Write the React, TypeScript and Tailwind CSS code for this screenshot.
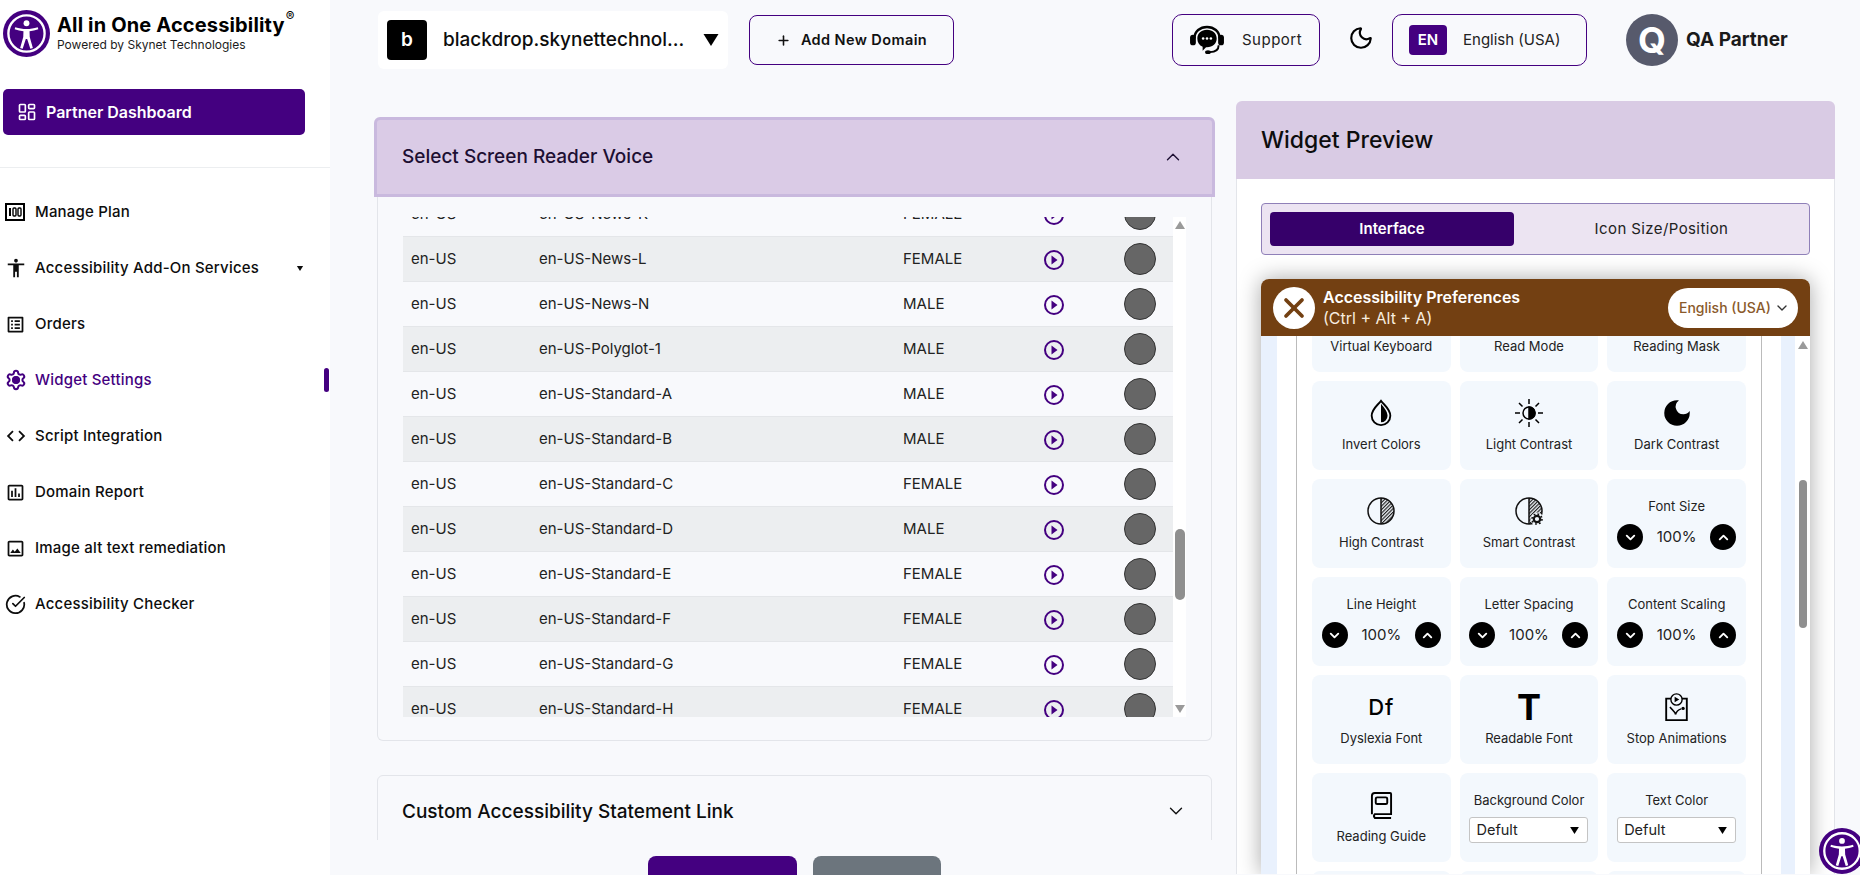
import { ChevronDown, ChevronUp, CircleCheckBig, LayoutDashboard, Moon, Plus, Settings, X } from "lucide-react";
import { MdAccessibility, MdCode, MdDarkMode, MdOutlineAssessment, MdOutlineImage, MdOutlineListAlt } from "react-icons/md";

const voices = [
  ["en-US-News-K", "FEMALE"],
  ["en-US-News-L", "FEMALE"],
  ["en-US-News-N", "MALE"],
  ["en-US-Polyglot-1", "MALE"],
  ["en-US-Standard-A", "MALE"],
  ["en-US-Standard-B", "MALE"],
  ["en-US-Standard-C", "FEMALE"],
  ["en-US-Standard-D", "MALE"],
  ["en-US-Standard-E", "FEMALE"],
  ["en-US-Standard-F", "FEMALE"],
  ["en-US-Standard-G", "FEMALE"],
  ["en-US-Standard-H", "FEMALE"],
];

function LogoMark({ className }: { className: string }) {
  return (
    <svg viewBox="0 0 48 48" className={className}>
      <circle cx="24" cy="24" r="24" fill="#440080" />
      <circle cx="24" cy="24" r="18.5" fill="none" stroke="#fff" strokeWidth="2.4" />
      <circle cx="24" cy="13.5" r="3" fill="#fff" />
      <path
        d="M12.5 17.5c4 1.2 7.5 1.8 11.5 1.8s7.500-.6 11.500-1.800l.6 2.100c-3 1-6 1.700-9 2l.2 6 3.200 11.200-2.600.8-3.200-10h-1.400l-3.200 10-2.600-.8 3.200-11.200.2-6c-3-.3-6-1-9-2z"
        fill="#fff"
      />
    </svg>
  );
}

function PlanIcon() {
  return (
    <svg viewBox="0 0 20 18" className="h-[18px] w-[20px]">
      <rect x="1" y="1" width="18" height="16" fill="none" stroke="#000" strokeWidth="2" />
      <rect x="4" y="5" width="2" height="8" />
      <rect x="8" y="5" width="3" height="8" rx="1" fill="none" stroke="#000" strokeWidth="1.400" />
      <rect x="13" y="5" width="3" height="8" rx="1" fill="none" stroke="#000" strokeWidth="1.400" />
    </svg>
  );
}

function WidgetSettingsIcon() {
  return (
    <span className="relative flex h-[22px] w-[22px] items-center justify-center text-[#440080]">
      <Settings size={22} strokeWidth={2.2} />
      <span className="absolute h-[8px] w-[8px] rounded-full bg-[#440080]" />
    </span>
  );
}

function SupportIcon() {
  return (
    <svg viewBox="0 0 36 32" className="h-[31px] w-[36px]">
      <path d="M5 14C5 6.500 11 2 18 2s13 4.500 13 12" fill="none" stroke="#000" strokeWidth="2.500" />
      <rect x="0.500" y="10" width="6" height="11" rx="3" />
      <rect x="29.500" y="10" width="6" height="11" rx="3" />
      <path d="M18 5c6 0 10 4 10 9s-4 9-10 9h-1l-3.500 3.500V22.500C10 21 8 18 8 14c0-5 4-9 10-9z" />
      <circle cx="14" cy="14" r="1.300" fill="#fff" />
      <circle cx="18" cy="14" r="1.300" fill="#fff" />
      <circle cx="22" cy="14" r="1.300" fill="#fff" />
      <path d="M30 21c0 5-4 7-9 7" fill="none" stroke="#000" strokeWidth="2" />
      <ellipse cx="19" cy="28" rx="3" ry="2" />
    </svg>
  );
}

function PlayIcon() {
  return (
    <svg viewBox="0 0 20 20" className="mt-[2px] h-[20px] w-[20px]">
      <circle cx="10" cy="10" r="9" fill="none" stroke="#440080" strokeWidth="2" />
      <path d="M7.500 5.500l6 4.500-6 4.500z" fill="#440080" />
    </svg>
  );
}

function Triangle({ up, className }: { up?: boolean; className: string }) {
  return (
    <svg viewBox="0 0 10 8" className={className} fill="currentColor">
      <path d={up ? "M5 0l5 8H0z" : "M0 0h10L5 8z"} />
    </svg>
  );
}

function NavItem({ icon, label, active, caret }: { icon: React.ReactNode; label: string; active?: boolean; caret?: boolean }) {
  return (
    <div className={`flex h-[56px] items-center pl-[5px] ${active ? "text-[#440080]" : "text-[#0d0d0d]"}`}>
      <span className="flex w-[30px] shrink-0 items-center">{icon}</span>
      <span className="text-[15px] font-medium tracking-[0.2px]">{label}</span>
      {caret && <Triangle className="ml-auto mr-[26px] h-[5px] w-[8px]" />}
      {active && <span className="ml-auto mr-px h-[24px] w-[5px] rounded-full bg-[#440080]" />}
    </div>
  );
}

function Sidebar() {
  return (
    <aside className="h-full w-[330px] shrink-0 bg-white">
      <div className="flex pl-[3px] pt-[10px]">
        <LogoMark className="h-[47px] w-[47px]" />
        <div className="ml-[7px]">
          <div className="mt-[3px] flex text-[20px] font-bold leading-[24px] tracking-[0.15px] text-black">
            All in One Accessibility<sup className="ml-px mt-[9px] text-[13px] font-normal">®</sup>
          </div>
          <div className="text-[12px] leading-[15px] text-[#1c1c1c]">Powered by Skynet Technologies</div>
        </div>
      </div>
      <div className="ml-[3px] mt-[32px] flex h-[46px] w-[302px] items-center rounded-[5px] bg-[#440080] pl-[14px] text-white">
        <LayoutDashboard size={20} strokeWidth={2} />
        <span className="ml-[9px] text-[16px] font-semibold">Partner Dashboard</span>
      </div>
      <div className="mt-[32px] h-px bg-[#eceef0]" />
      <nav className="mt-[16px]">
        <NavItem icon={<PlanIcon />} label="Manage Plan" />
        <NavItem icon={<MdAccessibility size={22} />} label="Accessibility Add-On Services" caret />
        <NavItem icon={<MdOutlineListAlt size={21} />} label="Orders" />
        <NavItem icon={<WidgetSettingsIcon />} label="Widget Settings" active />
        <NavItem icon={<MdCode size={22} />} label="Script Integration" />
        <NavItem icon={<MdOutlineAssessment size={21} />} label="Domain Report" />
        <NavItem icon={<MdOutlineImage size={21} />} label="Image alt text remediation" />
        <NavItem icon={<CircleCheckBig size={21} strokeWidth={2} />} label="Accessibility Checker" />
      </nav>
    </aside>
  );
}

function TopBar() {
  return (
    <header className="flex h-[80px] items-center">
      <div className="ml-[48px] flex h-[58px] w-[350px] items-center rounded-[6px] bg-white pl-[9px]">
        <span className="flex h-[40px] w-[40px] items-center justify-center rounded-[4px] bg-black text-[19px] font-semibold text-white">b</span>
        <span className="ml-[16px] w-[255px] text-[19px] font-medium text-[#0d0d0d]">blackdrop.skynettechnol...</span>
        <Triangle className="ml-[4px] h-[12px] w-[18px] text-black" />
      </div>
      <div className="ml-[21px] flex h-[50px] w-[205px] items-center justify-center gap-[10px] rounded-[8px] border border-[#440080] text-[14.500px] font-semibold tracking-[0.4px] text-[#111]">
        <Plus size={15} strokeWidth={2.5} />
        Add New Domain
      </div>
      <div className="ml-[218px] flex h-[52px] w-[148px] items-center rounded-[10px] border border-[#440080] pl-[16px]">
        <SupportIcon />
        <span className="ml-[17px] text-[15px] tracking-[0.5px] text-[#222]">Support</span>
      </div>
      <Moon size={26} strokeWidth={2} className="ml-[28px] -mt-[4px] text-black" />
      <div className="ml-[18px] flex h-[52px] w-[195px] items-center rounded-[10px] border border-[#440080] pl-[16px]">
        <span className="flex h-[30px] w-[38px] items-center justify-center rounded-[4px] bg-[#440080] text-[15px] font-semibold text-white">EN</span>
        <span className="ml-[16px] text-[15px] text-[#222]">English (USA)</span>
      </div>
      <span className="ml-[39px] flex h-[52px] w-[52px] items-center justify-center rounded-full bg-[#575a6c] text-[36px] font-bold text-white">Q</span>
      <span className="ml-[8px] text-[19px] font-bold text-[#1a1a1a]">QA Partner</span>
    </header>
  );
}

function VoiceTable() {
  return (
    <div className="mx-[25px] mt-[20px] flex h-[500px] overflow-hidden">
      <div className="-mt-[25px] w-[770px] shrink-0">
        {voices.map(([name, gender], i) => (
          <div
            key={name}
            className={`grid h-[45px] grid-cols-[128px_364px_141px_80px_57px] items-center border-b border-[#e4e6e9] text-[15px] text-[#222] ${
              i % 2 === 1 ? "bg-[#eceef0]" : "bg-[#f8f9fc]"
            }`}
          >
            <span className="pl-[8px]">en-US</span>
            <span className="pl-[8px]">{name}</span>
            <span className="pl-[8px]">{gender}</span>
            <span className="pl-[8px]">
              <PlayIcon />
            </span>
            <span className="pl-[8px]">
              <span className="block h-[32px] w-[32px] rounded-full border border-[#333] bg-[#666]" />
            </span>
          </div>
        ))}
      </div>
      <div className="flex w-[15px] flex-col items-center bg-white pt-[4px]">
        <Triangle up className="h-[8px] w-[10px] text-[#9a9a9a]" />
        <span className="mt-[300px] h-[71px] w-[10px] rounded-full bg-[#8f8f8f]" />
        <Triangle className="mt-[105px] h-[8px] w-[10px] text-[#9a9a9a]" />
      </div>
    </div>
  );
}

function LeftColumn() {
  return (
    <div className="ml-[44px] mt-[38px] w-[841px] shrink-0">
      <div className="h-[723px] overflow-hidden">
        <div className="flex h-[80px] items-center justify-between rounded-t-[6px] border-[3px] border-[#c9b9de] bg-[#dacbe6] pl-[25px] pr-[28px]">
          <h2 className="text-[19px] font-medium text-[#1d0f33]">Select Screen Reader Voice</h2>
          <ChevronUp size={22} strokeWidth={1.500} className="text-[#1d0f33]" />
        </div>
        <div className="mx-[3px] h-[544px] overflow-hidden rounded-b-[6px] border border-t-0 border-[#e3e5ea]">
          <VoiceTable />
        </div>
        <div className="mx-[3px] mt-[34px] flex h-[80px] items-start justify-between rounded-t-[6px] border border-[#e3e5ea] pl-[24px] pr-[24px] pt-[22px]">
          <h2 className="text-[19px] font-medium text-[#0d0d0d]">Custom Accessibility Statement Link</h2>
          <ChevronDown size={22} strokeWidth={1.500} className="mt-[2px] text-[#111]" />
        </div>
      </div>
      <div className="flex gap-[16px] pl-[274px] pt-[16px]">
        <button aria-label="Save" className="h-[40px] w-[149px] rounded-[8px] bg-[#440080]" />
        <button aria-label="Cancel" className="h-[40px] w-[128px] rounded-[8px] bg-[#6c757d]" />
      </div>
    </div>
  );
}

function HatchedCircle({ gear }: { gear?: boolean }) {
  return (
    <svg viewBox="0 0 30 30" className="h-[30px] w-[30px]">
      <defs>
        <pattern id={gear ? "hatch-gear" : "hatch"} width="2.500" height="2.500" patternUnits="userSpaceOnUse" patternTransform="rotate(45)">
          <rect width="1.200" height="2.500" fill="#222" />
        </pattern>
      </defs>
      <path d="M15 2a13 13 0 0 1 0 26z" fill={gear ? "url(#hatch-gear)" : "url(#hatch)"} />
      <circle cx="15" cy="15" r="13" fill="none" stroke="#111" strokeWidth="1.500" />
      <line x1="15" y1="2" x2="15" y2="28" stroke="#111" strokeWidth="1.500" />
      {gear && (
        <>
          <circle cx="23" cy="23" r="6.500" fill="#f3f8fd" />
          <circle cx="23" cy="23" r="3.200" fill="none" stroke="#111" strokeWidth="2.200" />
          <circle cx="23" cy="23" r="5" fill="none" stroke="#111" strokeWidth="1.600" strokeDasharray="1.800 2.100" />
        </>
      )}
    </svg>
  );
}

function InvertIcon() {
  return (
    <svg viewBox="0 0 24 30" className="h-[28px] w-[24px]">
      <path d="M12 2c4 5 10 9 10 16a10 10 0 0 1-20 0C2 11 8 7 12 2z" fill="none" stroke="#000" strokeWidth="2" />
      <path d="M12 5c3 4 7 8 7 13a7 7 0 0 1-7 7z" />
    </svg>
  );
}

function SunIcon() {
  return (
    <svg viewBox="0 0 30 30" className="h-[30px] w-[30px]" stroke="#000" strokeWidth="1.500">
      <circle cx="15" cy="15" r="6" fill="none" />
      <path d="M15 9a6 6 0 0 1 0 12z" fill="#000" />
      <path d="M15 1v5M15 24v5M1 15h5M24 15h5M5 5l3.500 3.500M21.500 21.500L25 25M5 25l3.500-3.500M21.500 8.500L25 5" />
    </svg>
  );
}

function StopAnimIcon() {
  return (
    <svg viewBox="0 0 26 32" className="h-[30px] w-[25px]">
      <path d="M8 7H2v23h22V7h-6" fill="none" stroke="#000" strokeWidth="2" />
      <circle cx="13" cy="8" r="6" fill="#f3f8fd" stroke="#000" strokeWidth="1.500" />
      <path d="M11 5l5 3-5 3z" />
      <path d="M6 16c2 3 5 4 6 8M12 24c1-4 3-5 6-6" fill="none" stroke="#000" strokeWidth="1.500" />
      <circle cx="20" cy="17.500" r="1.800" />
    </svg>
  );
}

function BookIcon() {
  return (
    <svg viewBox="0 0 24 28" className="h-[27px] w-[23px]">
      <path d="M2 23V4a3 3 0 0 1 3-3h16a1 1 0 0 1 1 1v21H5a3 3 0 0 0 0 4h17" fill="none" stroke="#000" strokeWidth="2" />
      <rect x="6" y="5.500" width="12" height="7" rx="1.500" fill="none" stroke="#000" strokeWidth="2" />
    </svg>
  );
}

function IconTile({ icon, label }: { icon?: React.ReactNode; label: string }) {
  return (
    <div className="flex h-[89px] flex-col items-center rounded-[8px] bg-[#f3f8fd] pt-[14px]">
      <div className="flex h-[36px] items-center justify-center">{icon}</div>
      <span className="mt-[4px] text-[13px] leading-[18px] text-[#222]">{label}</span>
    </div>
  );
}

function StepTile({ label }: { label: string }) {
  return (
    <div className="flex h-[89px] flex-col items-center rounded-[8px] bg-[#f3f8fd] pt-[18px]">
      <span className="text-[13px] leading-[18px] text-[#222]">{label}</span>
      <div className="mt-[9px] flex w-[119px] items-center justify-between">
        <span className="flex h-[26px] w-[26px] items-center justify-center rounded-full bg-black text-white">
          <ChevronDown size={15} strokeWidth={3} />
        </span>
        <span className="text-[15px] text-[#222]">100%</span>
        <span className="flex h-[26px] w-[26px] items-center justify-center rounded-full bg-black text-white">
          <ChevronUp size={15} strokeWidth={3} />
        </span>
      </div>
    </div>
  );
}

function SelectTile({ label }: { label: string }) {
  return (
    <div className="flex h-[89px] flex-col items-center rounded-[8px] bg-[#f3f8fd] pt-[18px]">
      <span className="text-[13px] leading-[18px] text-[#222]">{label}</span>
      <div className="mt-[8px] flex h-[26px] w-[119px] items-center justify-between rounded-[3px] border border-[#c4c4c4] bg-white pl-[6px] pr-[7px] text-[14.500px] text-[#222]">
        Defult
        <Triangle className="h-[7px] w-[11px] text-black" />
      </div>
    </div>
  );
}

function PreviewWidget() {
  return (
    <div className="mt-[24px] rounded-t-[8px] shadow-[0_0_22px_rgba(0,0,0,0.35)]">
      <div className="flex h-[57px] items-center rounded-t-[8px] bg-[#734012] pl-[12px] pr-[12px]">
        <span className="flex h-[42px] w-[42px] items-center justify-center rounded-full bg-white text-[#734012]">
          <X size={32} strokeWidth={2.800} />
        </span>
        <div className="ml-[8px] text-white">
          <div className="text-[16px] font-semibold leading-[21px]">Accessibility Preferences</div>
          <div className="text-[16px] leading-[20px] text-[#f7ecdf]">(Ctrl + Alt + A)</div>
        </div>
        <div className="ml-auto flex h-[40px] w-[130px] items-center justify-between rounded-full bg-white pl-[11px] pr-[8px] text-[14px] font-medium text-[#8a5a2b]">
          English (USA)
          <ChevronDown size={16} strokeWidth={2} className="text-[#333]" />
        </div>
      </div>
      <div className="flex h-[538px] overflow-hidden bg-[#e9f1fd]">
        <div className="ml-[16px] w-[504px] shrink-0 bg-white px-[19px]">
          <div className="h-full overflow-hidden border-x border-[#bbb] px-[15px]">
            <div className="-mt-[53px] grid grid-cols-3 gap-[9px]">
              <IconTile label="Virtual Keyboard" />
              <IconTile label="Read Mode" />
              <IconTile label="Reading Mask" />
              <IconTile icon={<InvertIcon />} label="Invert Colors" />
              <IconTile icon={<SunIcon />} label="Light Contrast" />
              <IconTile icon={<MdDarkMode size={34} />} label="Dark Contrast" />
              <IconTile icon={<HatchedCircle />} label="High Contrast" />
              <IconTile icon={<HatchedCircle gear />} label="Smart Contrast" />
              <StepTile label="Font Size" />
              <StepTile label="Line Height" />
              <StepTile label="Letter Spacing" />
              <StepTile label="Content Scaling" />
              <IconTile icon={<span className="text-[22px] font-medium tracking-[1px] text-black">Df</span>} label="Dyslexia Font" />
              <IconTile icon={<span className="text-[36px] font-bold leading-none text-black">T</span>} label="Readable Font" />
              <IconTile icon={<StopAnimIcon />} label="Stop Animations" />
              <IconTile icon={<BookIcon />} label="Reading Guide" />
              <SelectTile label="Background Color" />
              <SelectTile label="Text Color" />
              <div className="h-[89px] rounded-[8px] bg-[#f3f8fd]" />
              <div className="h-[89px] rounded-[8px] bg-[#f3f8fd]" />
              <div className="h-[89px] rounded-[8px] bg-[#f3f8fd]" />
            </div>
          </div>
        </div>
        <div className="ml-[14px] flex w-[16px] flex-col items-center bg-white pt-[5px]">
          <Triangle up className="h-[8px] w-[10px] text-[#9a9a9a]" />
          <span className="mt-[131px] h-[148px] w-[8px] rounded-full bg-[#8f8f8f]" />
        </div>
      </div>
    </div>
  );
}

function RightColumn() {
  return (
    <div className="ml-[21px] mt-[22px] h-[773px] w-[599px] shrink-0 overflow-hidden rounded-t-[6px]">
      <div className="flex h-[78px] items-center bg-[#d9cbe4] pl-[25px]">
        <h2 className="text-[23px] font-medium text-[#0d0d0d]">Widget Preview</h2>
      </div>
      <div className="h-[695px] border-x border-[#e3e5ea] bg-white px-[24px] pt-[24px]">
        <div className="flex h-[52px] items-center rounded-[4px] border border-[#8f80b8] bg-[#ece4f2] pl-[8px]">
          <span className="flex h-[34px] w-[244px] items-center justify-center rounded-[4px] bg-[#36006a] text-[15px] font-semibold text-white">
            Interface
          </span>
          <span className="flex-1 text-center text-[15px] tracking-[0.4px] text-[#222]">Icon Size/Position</span>
        </div>
        <PreviewWidget />
      </div>
    </div>
  );
}

export default function App() {
  return (
    <div className="relative flex h-[875px] w-[1860px] overflow-hidden bg-[#f8f9fc] [font-family:Inter,sans-serif]">
      <Sidebar />
      <main className="min-w-0 flex-1">
        <TopBar />
        <div className="-mt-px flex h-[796px] items-start">
          <LeftColumn />
          <RightColumn />
        </div>
      </main>
      <LogoMark className="absolute left-[1819px] top-[828px] h-[46px] w-[46px]" />
    </div>
  );
}
